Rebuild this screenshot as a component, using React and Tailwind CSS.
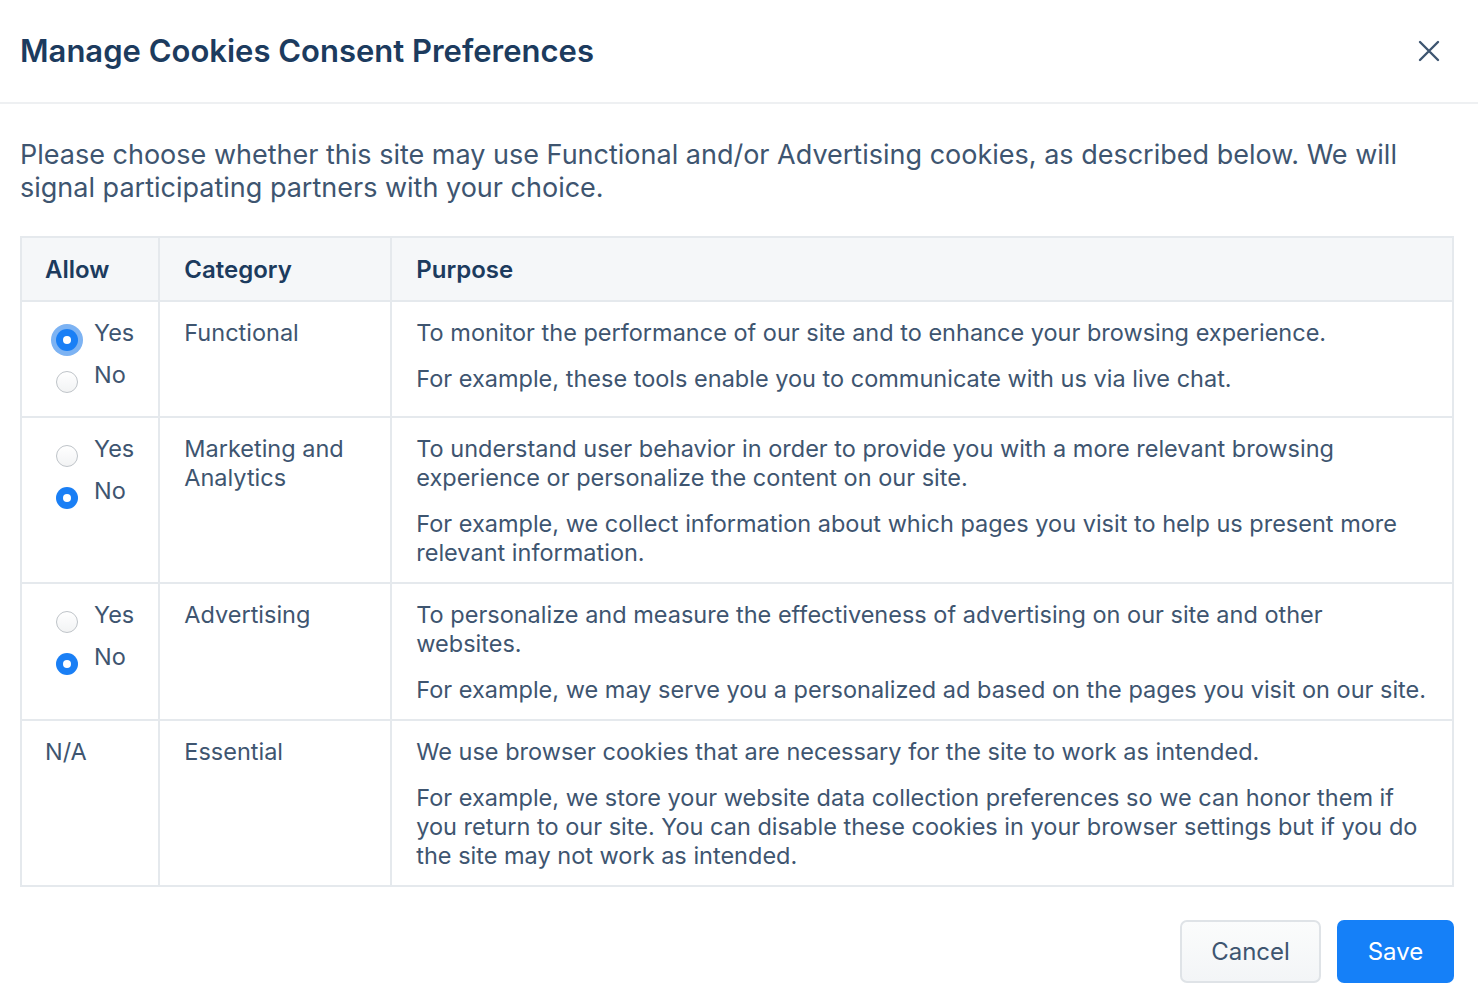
import React from "react";

const rows = [
  {
    allow: "yes",
    focus: true,
    category: "Functional",
    purpose: [
      "To monitor the performance of our site and to enhance your browsing experience.",
      "For example, these tools enable you to communicate with us via live chat.",
    ],
  },
  {
    allow: "no",
    category: "Marketing and Analytics",
    purpose: [
      "To understand user behavior in order to provide you with a more relevant browsing experience or personalize the content on our site.",
      "For example, we collect information about which pages you visit to help us present more relevant information.",
    ],
  },
  {
    allow: "no",
    category: "Advertising",
    purpose: [
      "To personalize and measure the effectiveness of advertising on our site and other websites.",
      "For example, we may serve you a personalized ad based on the pages you visit on our site.",
    ],
  },
  {
    allow: null,
    category: "Essential",
    purpose: [
      "We use browser cookies that are necessary for the site to work as intended.",
      "For example, we store your website data collection preferences so we can honor them if you return to our site. You can disable these cookies in your browser settings but if you do the site may not work as intended.",
    ],
  },
];

const Radio = ({ checked, focus }) => (
  <span
    className={
      "mt-[11px] ml-[11px] flex h-[22px] w-[22px] shrink-0 items-center justify-center rounded-full " +
      (checked
        ? "bg-[#1a7ff5]" + (focus ? " ring-[5px] ring-[#7db3f3]" : "")
        : "border border-[#bfc4c9] bg-gradient-to-b from-white to-[#f2f3f4]")
    }
  >
    {checked && <span className="h-[8px] w-[8px] rounded-full bg-white" />}
  </span>
);

const Option = ({ label, checked, focus }) => (
  <label className="mb-[13px] flex h-[29px] items-start gap-[16px]">
    <Radio checked={checked} focus={focus} />
    <span>{label}</span>
  </label>
);

export default function App() {
  return (
    <div
      className="min-h-screen bg-white text-[#3e5570]"
      style={{ fontFamily: "Inter, 'Noto Sans', sans-serif" }}
    >
      {/* Header */}
      <div className="flex h-[104px] items-center justify-between border-b-2 border-[#eef0f2] pl-[20px] pr-[38px]">
        <h1 className="text-[31px] font-semibold text-[#1c3b5e]">
          Manage Cookies Consent Preferences
        </h1>
        <button className="text-[#3e5570]">
          <svg width="22" height="22" viewBox="0 0 22 22" fill="none" stroke="currentColor" strokeWidth="2.4" strokeLinecap="round">
            <path d="M2 2L20 20M20 2L2 20" />
          </svg>
        </button>
      </div>

      <div className="pl-[20px] pr-[24px]">
        <p className="mt-[34px] text-[27px] leading-[33px]">
          Please choose whether this site may use Functional and/or Advertising cookies, as described below. We will
          signal participating partners with your choice.
        </p>

        {/* Table */}
        <table className="mt-[32px] w-full border-collapse border-2 border-[#e5e9ed] text-[23.5px] leading-[29px]">
          <thead>
            <tr className="bg-[#f5f7f9] text-left text-[24px] text-[#1c3b5e]">
              <th className="w-[136px] border-2 border-[#e5e9ed] pl-[23px] pr-[24px] pt-[17px] pb-[16px] font-semibold">Allow</th>
              <th className="w-[232px] border-2 border-[#e5e9ed] px-[24px] pt-[17px] pb-[16px] font-semibold">Category</th>
              <th className="border-2 border-[#e5e9ed] px-[24px] pt-[17px] pb-[16px] font-semibold">Purpose</th>
            </tr>
          </thead>
          <tbody>
            {rows.map((r, i) => (
              <tr key={i} className="align-top">
                <td className="border-2 border-[#e5e9ed] pl-[23px] pr-[24px] pt-[16px] pb-[14px]">
                  {r.allow ? (
                    <div>
                      <Option label="Yes" checked={r.allow === "yes"} focus={r.focus} />
                      <Option label="No" checked={r.allow === "no"} />
                    </div>
                  ) : (
                    "N/A"
                  )}
                </td>
                <td className="border-2 border-[#e5e9ed] px-[24px] pt-[16px] pb-[15px]">{r.category}</td>
                <td className="border-2 border-[#e5e9ed] px-[24px] pt-[16px] pb-[15px]">
                  <div className="flex flex-col gap-[17px]">
                    {r.purpose.map((p, j) => (
                      <p key={j}>{p}</p>
                    ))}
                  </div>
                </td>
              </tr>
            ))}
          </tbody>
        </table>

        {/* Footer buttons */}
        <div className="mt-[33px] flex justify-end gap-[16px]">
          <button className="h-[63px] w-[141px] rounded-[7px] border-2 border-[#dfe3e7] bg-gradient-to-b from-[#fbfcfc] to-[#f3f5f7] text-[24px] text-[#3e5570]">
            Cancel
          </button>
          <button className="h-[63px] w-[117px] rounded-[7px] bg-[#1580f8] text-[24px] text-white">
            Save
          </button>
        </div>
      </div>
    </div>
  );
}
